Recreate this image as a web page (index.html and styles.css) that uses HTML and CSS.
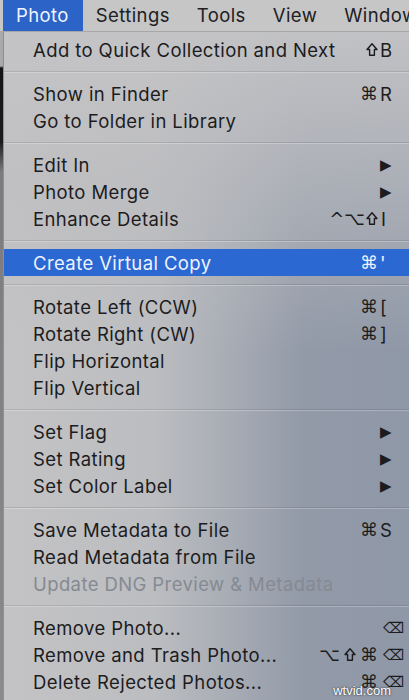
FILE: index.html
```html
<!DOCTYPE html>
<html lang="en">
<head>
    <meta charset="UTF-8">
    <meta name="viewport" content="width=device-width, initial-scale=1.0">
    <title>Photo Menu</title>
    <link rel="stylesheet" href="styles.css">
</head>
<body>
    <header class="menubar">
        <div class="menubar-item active">Photo</div>
        <div class="menubar-item">Settings</div>
        <div class="menubar-item">Tools</div>
        <div class="menubar-item">View</div>
        <div class="menubar-item">Window</div>
    </header>

    <div class="screen">
        <div class="edge"></div>
        <ul class="menu">
            <li class="item"><span>Add to Quick Collection and Next</span><span class="keys"><span class="mods"><svg class="shift" viewBox="0 0 12 14"><path d="M6 1.2 L11 7 H8.4 V12.8 H3.6 V7 H1 Z"/></svg></span><span class="key">B</span></span></li>
            <li class="sep"></li>
            <li class="item"><span>Show in Finder</span><span class="keys"><span class="mods">&#8984;</span><span class="key">R</span></span></li>
            <li class="item"><span>Go to Folder in Library</span></li>
            <li class="sep"></li>
            <li class="item"><span>Edit In</span><span class="arrow">&#9654;</span></li>
            <li class="item"><span>Photo Merge</span><span class="arrow">&#9654;</span></li>
            <li class="item"><span>Enhance Details</span><span class="keys"><span class="mods">^&#8997;<svg class="shift" viewBox="0 0 12 14"><path d="M6 1.2 L11 7 H8.4 V12.8 H3.6 V7 H1 Z"/></svg></span><span class="key narrow">I</span></span></li>
            <li class="sep"></li>
            <li class="item selected"><span>Create Virtual Copy</span><span class="keys"><span class="mods">&#8984;</span><span class="key">'</span></span></li>
            <li class="sep"></li>
            <li class="item"><span>Rotate Left (CCW)</span><span class="keys"><span class="mods">&#8984;</span><span class="key">[</span></span></li>
            <li class="item"><span>Rotate Right (CW)</span><span class="keys"><span class="mods">&#8984;</span><span class="key">]</span></span></li>
            <li class="item"><span>Flip Horizontal</span></li>
            <li class="item"><span>Flip Vertical</span></li>
            <li class="sep"></li>
            <li class="item"><span>Set Flag</span><span class="arrow">&#9654;</span></li>
            <li class="item"><span>Set Rating</span><span class="arrow">&#9654;</span></li>
            <li class="item"><span>Set Color Label</span><span class="arrow">&#9654;</span></li>
            <li class="sep"></li>
            <li class="item"><span>Save Metadata to File</span><span class="keys"><span class="mods">&#8984;</span><span class="key">S</span></span></li>
            <li class="item"><span>Read Metadata from File</span></li>
            <li class="item disabled"><span>Update DNG Preview &amp; Metadata</span></li>
            <li class="sep"></li>
            <li class="item"><span>Remove Photo...</span><span class="keys"><span class="mods"></span><span class="key del">&#9003;</span></span></li>
            <li class="item"><span>Remove and Trash Photo...</span><span class="keys"><span class="mods wide">&#8997;<svg class="shift" viewBox="0 0 12 14"><path d="M6 1.2 L11 7 H8.4 V12.8 H3.6 V7 H1 Z"/></svg>&#8984;</span><span class="key del">&#9003;</span></span></li>
            <li class="item"><span>Delete Rejected Photos...</span><span class="keys"><span class="mods">&#8984;</span><span class="key del">&#9003;</span></span></li>
        </ul>
    </div>

    <div class="watermark">wtvid.com</div>
</body>
</html>
```

FILE: styles.css
```css
body {
    margin: 0;
    width: 409px;
    height: 700px;
    overflow: hidden;
    font-family: Inter, 'Liberation Sans', Arial, sans-serif;
    font-size: 18.5px;
    color: #1c1c1e;
    background-color: #bdbdbf;
    position: relative;
}

.menubar {
    display: flex;
    height: 31px;
    padding-left: 3px;
    overflow: hidden;
    background-color: #c6c6c7;
    border-bottom: 1px solid #a7a7a9;
}

.menubar-item {
    flex-shrink: 0;
    padding: 0 14px 0 13px;
    line-height: 31px;
    letter-spacing: 0.4px;
    color: #202022;
}

.menubar-item.active {
    background-color: #2c63c7;
    color: #eef3ff;
}

.screen {
    display: flex;
    height: 668px;
}

.edge {
    width: 3px;
    background: linear-gradient(to bottom, #a9a9ab 0, #a9a9ab 34px, #141414 36px, #1c1c1c 110px, #7c7c7e 140px, #8a8a8c 100%);
}

.menu {
    flex: 1;
    list-style: none;
    margin: 0;
    padding: 4px 0 0;
    border-left: 1px solid #8f8f92;
    background:
        linear-gradient(to bottom, rgba(196, 196, 198, 0.95) 0, rgba(190, 190, 193, 0.6) 150px, rgba(190, 190, 193, 0) 320px),
        linear-gradient(to right, #c3c3c5 0, #bcbdc0 150px, #a6abb4 230px, #929aa8 300px, #8f98a7 405px);
}

.item {
    display: flex;
    align-items: center;
    justify-content: space-between;
    height: 27px;
    padding: 0 4px 0 29px;
    white-space: nowrap;
    letter-spacing: 0.4px;
}

.item.selected {
    background-color: #2b68d2;
    color: #eef3ff;
}

.item.disabled {
    color: #858a92;
}

.sep {
    height: 1px;
    margin: 8px 0;
    background-color: rgba(0, 0, 0, 0.1);
    box-shadow: 0 1px 0 rgba(255, 255, 255, 0.25);
}

.keys {
    display: flex;
    align-items: center;
    font-family: 'DejaVu Sans', sans-serif;
    font-size: 18px;
    letter-spacing: 0;
}

.mods {
    display: flex;
    align-items: center;
    gap: 1px;
}

.mods.wide {
    gap: 4px;
}

.shift {
    width: 12px;
    height: 15px;
    fill: none;
    stroke: currentColor;
    stroke-width: 1.4;
    stroke-linejoin: round;
}

.key {
    display: inline-block;
    width: 27px;
    padding-left: 2px;
    box-sizing: border-box;
    font-family: Inter, 'Liberation Sans', Arial, sans-serif;
    font-size: 18.5px;
}

.key.narrow {
    padding-left: 3px;
}

.key.del {
    font-family: 'DejaVu Sans', sans-serif;
    font-size: 15px;
    padding-left: 5px;
}

.arrow {
    font-family: 'DejaVu Sans', sans-serif;
    font-size: 15px;
    padding-right: 13px;
}

.watermark {
    position: absolute;
    right: 18px;
    bottom: 2px;
    font-family: 'Liberation Sans', Arial, sans-serif;
    font-size: 13px;
    color: #ffffff;
    text-shadow: 0 0 2px rgba(0, 0, 0, 0.9);
}
```
